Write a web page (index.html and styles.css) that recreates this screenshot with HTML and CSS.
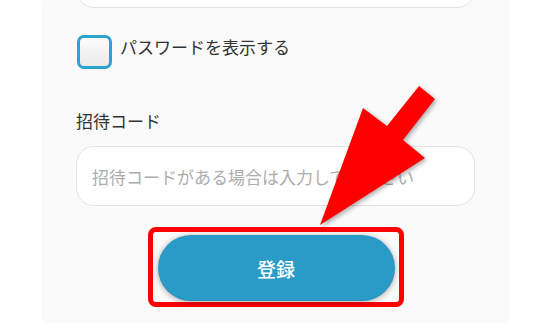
FILE: index.html
```html
<!DOCTYPE html>
<html lang="ja">
<head>
<meta charset="utf-8">
<title>登録</title>
<link rel="stylesheet" href="styles.css">
</head>
<body>
<div class="card">
  <div class="field field-top"></div>
  <label class="check-row">
    <span class="checkbox"></span>
    <span class="check-text">パスワードを表示する</span>
  </label>
  <div class="label">招待コード</div>
  <div class="field field-code"><span class="placeholder">招待コードがある場合は入力してください</span></div>
  <div class="frame">
    <button class="submit">登録</button>
  </div>
</div>
<svg class="arrow" width="553" height="323" viewBox="0 0 553 323">
  <polygon points="320,225 363,108 387,126 419,86 435,99 403,140 425,158" fill="#ff0000"/>
</svg>
</body>
</html>
```
FILE: styles.css
```css
html, body {
  margin: 0;
  padding: 0;
  background: #ffffff;
  height: 323px;
  overflow: hidden;
}
body {
  font-family: "Noto Sans CJK JP", "Noto Sans", sans-serif;
  color: #333333;
  position: relative;
}
.card {
  width: 463px;
  margin-left: 44px;
  height: 323px;
  box-sizing: border-box;
  padding: 0 32px;
  background: #fafafa;
  box-shadow: 0 0 4px rgba(0, 0, 0, 0.08);
  display: flex;
  flex-direction: column;
}
.field {
  height: 60px;
  box-sizing: border-box;
  background: #ffffff;
  border: 1.5px solid #e2e2e2;
  border-radius: 18px;
  display: flex;
  align-items: center;
  padding-left: 15px;
  flex-shrink: 0;
}
.field-top {
  margin-top: -52px;
}
.check-row {
  margin-top: 27px;
  display: flex;
  align-items: flex-start;
  gap: 8px;
}
.checkbox {
  width: 35px;
  height: 34px;
  box-sizing: border-box;
  border: 3px solid #2ca2cf;
  border-radius: 7px;
  background: linear-gradient(#fbfbfb, #ebebeb);
  margin-left: 1px;
}
.check-text {
  font-size: 17px;
  line-height: 24px;
  color: #333333;
}
.label {
  margin-top: 40px;
  font-size: 17px;
  line-height: 24px;
  color: #333333;
}
.field-code {
  margin-top: 13px;
}
.placeholder {
  font-size: 17px;
  color: #adadad;
  white-space: nowrap;
}
.frame {
  margin-top: 21px;
  align-self: center;
  border: 5px solid #ff0000;
  border-radius: 8px;
  padding: 3px 4px 1px 5px;
  background: #fcfcfc;
}
.submit {
  display: block;
  width: 237px;
  height: 66px;
  border: none;
  border-radius: 33px;
  background: #2a9bc7;
  box-shadow: 0 1px 6px rgba(0, 0, 0, 0.35), inset 0 -1px 0 rgba(0, 0, 0, 0.08);
  color: #ffffff;
  font-family: "Noto Sans CJK JP", "Noto Sans", sans-serif;
  font-size: 19px;
  font-weight: 500;
  padding: 0;
}
.arrow {
  position: absolute;
  left: 0;
  top: 0;
  filter: drop-shadow(2px 2px 2px rgba(0, 0, 0, 0.3));
  pointer-events: none;
}
```
